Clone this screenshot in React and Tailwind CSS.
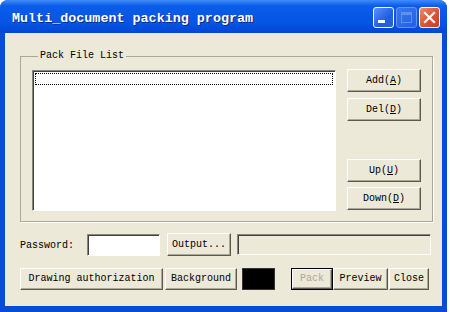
import React from "react";

const btn =
  "flex items-center justify-center bg-[#ECE9D8] border border-t-white border-l-white border-r-[#5A5A50] border-b-[#5A5A50] shadow-[inset_-1px_-1px_0_#ACA899]";

const sunken =
  "border border-t-[#8A877A] border-l-[#8A877A] border-r-white border-b-white shadow-[inset_1px_1px_0_#404040]";

function Key({ children }) {
  return <span className="underline underline-offset-[1px]">{children}</span>;
}

function TitleButtons() {
  return (
    <div className="flex items-center gap-[2px] mr-[7px] mt-[2px]">
      <div className="relative w-[21px] h-[21px] rounded-[3px] border border-white bg-[linear-gradient(135deg,#5C93F7,#1F5FE4_60%,#2A62D8)]">
        <div className="absolute left-[4px] bottom-[4px] w-[7px] h-[3px] bg-white" />
      </div>
      <div className="relative w-[21px] h-[21px] rounded-[3px] border border-[#8FB0F0] bg-[linear-gradient(135deg,#4E86F0,#2C68E4)] opacity-70">
        <div className="absolute left-[4px] top-[4px] w-[11px] h-[11px] border border-[#8AA8EC] border-t-[3px]" />
      </div>
      <div className="relative w-[21px] h-[21px] rounded-[3px] border border-white bg-[linear-gradient(135deg,#F08A6C,#E0502F_55%,#C8401F)] flex items-center justify-center">
        <svg width="13" height="13" viewBox="0 0 13 13">
          <path d="M2 2 L11 11 M11 2 L2 11" stroke="white" strokeWidth="2.2" strokeLinecap="square" />
        </svg>
      </div>
    </div>
  );
}

export default function App() {
  return (
    <div className="w-[450px] h-[312px] bg-white font-['Liberation_Mono',monospace] text-[10px] leading-[12px] text-black">
      <div className="w-[447px] h-[312px] flex flex-col rounded-t-[8px] bg-[#0A4AD8] overflow-hidden">
        <div className="h-[33px] flex items-center justify-between bg-[linear-gradient(180deg,#3E8DF8_0%,#0A5CEB_18%,#0555E4_70%,#0346D2_100%)]">
          <span className="ml-[12px] mt-[5px] text-white font-bold text-[13.4px] leading-[16px] whitespace-pre [text-shadow:1px_1px_0_#0A2A80]">
            Multi_document packing program
          </span>
          <TitleButtons />
        </div>

        <div className="flex-1 mx-[5px] mb-[6px] bg-[#ECE9D8] flex flex-col pl-[15px] pr-[9px]">
          <fieldset className="mt-[17px] border border-[#ACA899] shadow-[1px_1px_0_#fff] pl-[11px] pr-[11px] pb-[10px]">
            <legend className="ml-[6px] px-[2px] leading-[12px]">Pack File List</legend>
            <div className="flex mt-[8px]">
              <div className={`flex-1 h-[141px] bg-white ${sunken} p-[2px]`}>
                <div className="h-[12px] border border-dotted border-black" />
              </div>
              <div className="w-[74px] ml-[11px] flex flex-col">
                <div className={`${btn} h-[23px] -mt-[1px]`}>
                  Add(<Key>A</Key>)
                </div>
                <div className={`${btn} h-[23px] mt-[6px]`}>
                  Del(<Key>D</Key>)
                </div>
                <div className={`${btn} h-[23px] mt-[38px]`}>
                  Up(<Key>U</Key>)
                </div>
                <div className={`${btn} h-[23px] mt-[5px]`}>
                  Down(<Key>D</Key>)
                </div>
              </div>
            </div>
          </fieldset>

          <div className="flex items-center mt-[11px] h-[23px]">
            <span className="w-[67px] mt-[2px]">Password:</span>
            <div className={`w-[73px] h-[22px] bg-white ${sunken}`} />
            <div className={`${btn} w-[64px] h-[23px] ml-[7px]`}>Output...</div>
            <div className={`w-[194px] h-[21px] ml-[6px] ${sunken}`} />
          </div>

          <div className="flex items-center mt-[12px] h-[22px]">
            <div className={`${btn} w-[143px] h-[22px]`}>Drawing authorization</div>
            <div className={`${btn} w-[72px] h-[22px] ml-[2px]`}>Background</div>
            <div className="w-[33px] h-[22px] ml-[5px] bg-black border border-[#333]" />
            <div className="w-[42px] h-[22px] ml-[16px] border border-black text-[#ACA899]">
              <div className={`${btn} w-full h-full`}>Pack</div>
            </div>
            <div className={`${btn} w-[55px] h-[22px]`}>Preview</div>
            <div className={`${btn} w-[40px] h-[22px] ml-[1px]`}>Close</div>
          </div>
        </div>
      </div>
    </div>
  );
}
